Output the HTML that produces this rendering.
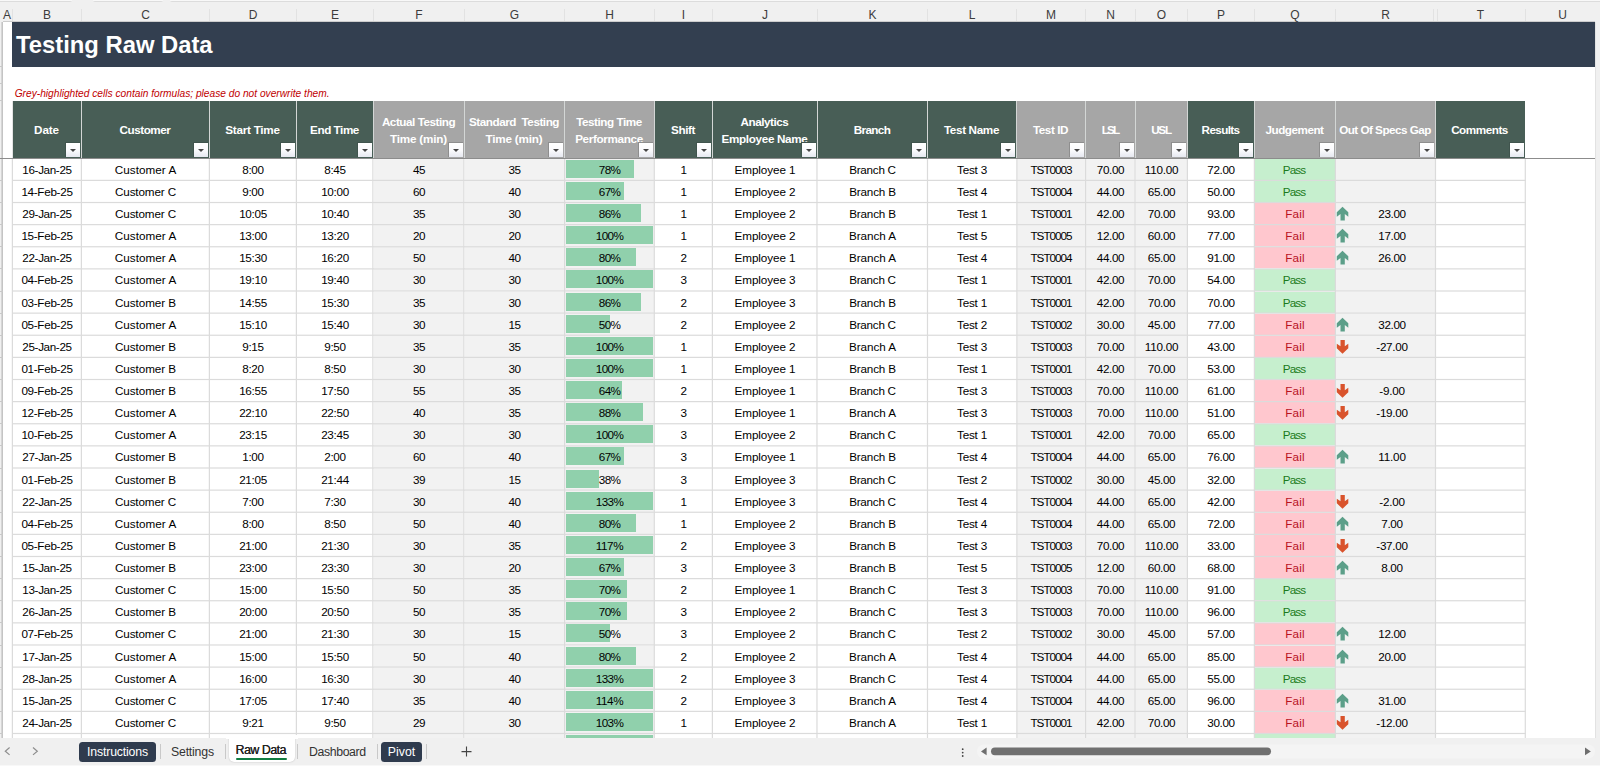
<!DOCTYPE html><html><head><meta charset="utf-8"><title>Testing Raw Data</title><style>
html,body{margin:0;padding:0}
body{width:1600px;height:766px;overflow:hidden;background:#fff;position:relative;font-family:"Liberation Sans",sans-serif;color:#000}
div,span{box-sizing:border-box}
.abs{position:absolute}
#colhdr{left:0;top:0;width:1600px;height:22px;background:#f0f0f0}
#colhdr .top{top:0;height:2px;background:linear-gradient(#f8f8f8 0,#f8f8f8 1px,#dcdcdc 1px,#dcdcdc 2px);border-radius:0 0 3px 3px}
.cl{position:absolute;top:7px;height:16px;line-height:16px;font-size:12px;color:#3c3c3c;text-align:center;width:40px;margin-left:-20px}
.ct{position:absolute;top:9px;width:1px;height:12px;background:#e2e2e2}
#rowhdr{left:0;top:22px;width:3px;height:716px;background:linear-gradient(to right,#f0f0f0 0,#f0f0f0 1px,#d6d6d6 1px,#d6d6d6 2px,#c4c4c4 2px,#c4c4c4 3px)}
#banner{left:12px;top:22px;width:1583px;height:45px;background:#333f50}
#title{left:16px;top:22px;height:45px;line-height:46px;font-size:23.8px;font-weight:bold;color:#fff;white-space:nowrap}
#note{left:14.7px;top:87px;height:14px;line-height:14px;font-size:10.2px;font-style:italic;color:#c00000;white-space:nowrap}
.hc{position:absolute;top:101px;height:57px;color:#fff;font-weight:bold;font-size:11.7px;line-height:17px;padding-right:2px;text-align:center;display:flex;align-items:center;justify-content:center;white-space:nowrap;overflow:hidden}
.hc.g{background:#485e56}
.hc.s{background:#a6a6a6}
.hsep{position:absolute;top:101px;height:57px;width:1.5px;background:#d3d6d5}
.fb{position:absolute;top:142px;width:15px;height:15px;box-sizing:border-box;background:linear-gradient(#ffffff,#fbfbfd 50%,#e6e8f0);border-top:1px solid #40544d;border-left:1px solid #40544d}
.fb.s{border-color:#8e8e8e}
.fb:after{content:"";position:absolute;left:4.1px;top:5.7px;border-left:3.2px solid transparent;border-right:3.2px solid transparent;border-top:3.9px solid #454545}
.c{position:absolute;text-align:center;font-size:11.7px;white-space:nowrap;overflow:hidden;color:#000}
.c.gr{background:#f2f2f2}
.c.pass{background:#c6efce;color:#1b7a1b}
.c.fail{background:#ffc7ce;color:#b8121f}
.bar{position:absolute;background:#90d0ac}
.hl{position:absolute;height:1px;background:#dcdcdc}
.vl{position:absolute;width:1px;background:#dcdcdc}
.vl2{position:absolute;width:1px;background:rgba(120,120,120,.22)}
.hl2{position:absolute;height:1px;background:rgba(120,120,120,.22)}
#frz{left:0;top:158px;width:1595px;height:1px;background:#8c8c8c}
#rightgap{left:1595px;top:22px;width:5px;height:716px;background:#f0f0f0;border-left:1px solid #e2e2e2}
#tabbar{left:0;top:738px;width:1600px;height:28px;background:#f0f0f0}
.tab{position:absolute;font-size:12.3px;height:20px;line-height:20px;white-space:nowrap;color:#333}
.pill{background:#2f3b4e;color:#fff;border-radius:3.5px;text-align:center}
.tsep{position:absolute;top:744px;width:1px;height:15px;background:#c9c9c9}
#active{left:229px;top:738px;width:66px;height:24px;background:#fff;border-radius:0 0 5px 5px;box-shadow:0 0 1.5px rgba(0,0,0,.25)}
#activecover{left:226px;top:735px;width:72px;height:3.5px;background:#fff}
svg{position:absolute;overflow:visible}
</style></head><body>
<div id="colhdr" class="abs"><div class="top abs" style="left:-4px;width:76px"></div><div class="top abs" style="left:92.5px;width:70px"></div><div class="top abs" style="left:170px;width:1434px"></div>
<i class="abs" style="left:3px;top:21px;width:1592px;height:1px;background:#cdcdcd"></i><span class="cl" style="left:7px">A</span>
<span class="cl" style="left:47.0px">B</span>
<span class="cl" style="left:145.5px">C</span>
<span class="cl" style="left:253.0px">D</span>
<span class="cl" style="left:335.0px">E</span>
<span class="cl" style="left:419.0px">F</span>
<span class="cl" style="left:514.5px">G</span>
<span class="cl" style="left:609.5px">H</span>
<span class="cl" style="left:683.5px">I</span>
<span class="cl" style="left:765.0px">J</span>
<span class="cl" style="left:872.5px">K</span>
<span class="cl" style="left:972.0px">L</span>
<span class="cl" style="left:1051.0px">M</span>
<span class="cl" style="left:1110.5px">N</span>
<span class="cl" style="left:1161.5px">O</span>
<span class="cl" style="left:1221.0px">P</span>
<span class="cl" style="left:1295.0px">Q</span>
<span class="cl" style="left:1385.5px">R</span>
<span class="cl" style="left:1480.5px">T</span>
<span class="cl" style="left:1562.5px">U</span>
<i class="ct" style="left:12px"></i>
<i class="ct" style="left:81px"></i>
<i class="ct" style="left:209px"></i>
<i class="ct" style="left:296px"></i>
<i class="ct" style="left:373px"></i>
<i class="ct" style="left:464px"></i>
<i class="ct" style="left:564px"></i>
<i class="ct" style="left:654px"></i>
<i class="ct" style="left:712px"></i>
<i class="ct" style="left:817px"></i>
<i class="ct" style="left:927px"></i>
<i class="ct" style="left:1016px"></i>
<i class="ct" style="left:1085px"></i>
<i class="ct" style="left:1135px"></i>
<i class="ct" style="left:1187px"></i>
<i class="ct" style="left:1254px"></i>
<i class="ct" style="left:1335px"></i>
<i class="ct" style="left:1433px"></i><i class="ct" style="left:1437px"></i>
<i class="ct" style="left:1525px"></i>
</div>
<div id="rowhdr" class="abs"></div>
<i class="hl" style="left:0;top:66px;width:3px;background:#c9c9c9"></i>
<i class="hl" style="left:0;top:83px;width:3px;background:#c9c9c9"></i>
<i class="hl" style="left:0;top:100px;width:3px;background:#c9c9c9"></i>
<i class="hl" style="left:0;top:158px;width:3px;background:#c9c9c9"></i>
<i class="hl" style="left:0;top:180px;width:3px;background:#c9c9c9"></i>
<i class="hl" style="left:0;top:202px;width:3px;background:#c9c9c9"></i>
<i class="hl" style="left:0;top:224px;width:3px;background:#c9c9c9"></i>
<i class="hl" style="left:0;top:246px;width:3px;background:#c9c9c9"></i>
<i class="hl" style="left:0;top:268px;width:3px;background:#c9c9c9"></i>
<i class="hl" style="left:0;top:291px;width:3px;background:#c9c9c9"></i>
<i class="hl" style="left:0;top:313px;width:3px;background:#c9c9c9"></i>
<i class="hl" style="left:0;top:335px;width:3px;background:#c9c9c9"></i>
<i class="hl" style="left:0;top:357px;width:3px;background:#c9c9c9"></i>
<i class="hl" style="left:0;top:379px;width:3px;background:#c9c9c9"></i>
<i class="hl" style="left:0;top:401px;width:3px;background:#c9c9c9"></i>
<i class="hl" style="left:0;top:423px;width:3px;background:#c9c9c9"></i>
<i class="hl" style="left:0;top:445px;width:3px;background:#c9c9c9"></i>
<i class="hl" style="left:0;top:468px;width:3px;background:#c9c9c9"></i>
<i class="hl" style="left:0;top:490px;width:3px;background:#c9c9c9"></i>
<i class="hl" style="left:0;top:512px;width:3px;background:#c9c9c9"></i>
<i class="hl" style="left:0;top:534px;width:3px;background:#c9c9c9"></i>
<i class="hl" style="left:0;top:556px;width:3px;background:#c9c9c9"></i>
<i class="hl" style="left:0;top:578px;width:3px;background:#c9c9c9"></i>
<i class="hl" style="left:0;top:600px;width:3px;background:#c9c9c9"></i>
<i class="hl" style="left:0;top:622px;width:3px;background:#c9c9c9"></i>
<i class="hl" style="left:0;top:645px;width:3px;background:#c9c9c9"></i>
<i class="hl" style="left:0;top:667px;width:3px;background:#c9c9c9"></i>
<i class="hl" style="left:0;top:689px;width:3px;background:#c9c9c9"></i>
<i class="hl" style="left:0;top:711px;width:3px;background:#c9c9c9"></i>
<i class="hl" style="left:0;top:733px;width:3px;background:#c9c9c9"></i>
<div id="banner" class="abs"></div><div id="title" class="abs">Testing Raw Data</div>
<div id="note" class="abs">Grey-highlighted cells contain formulas; please do not overwrite them.</div>
<div class="c" style="left:13px;top:159px;width:68px;height:21px;line-height:21px;letter-spacing:-0.37px">16-Jan-25</div>
<div class="c" style="left:82px;top:159px;width:127px;height:21px;line-height:21px;letter-spacing:0.06px">Customer A</div>
<div class="c" style="left:210px;top:159px;width:86px;height:21px;line-height:21px;letter-spacing:-0.29px">8:00</div>
<div class="c" style="left:297px;top:159px;width:76px;height:21px;line-height:21px;letter-spacing:-0.29px">8:45</div>
<div class="c gr" style="left:374px;top:159px;width:90px;height:21px;line-height:21px;letter-spacing:-0.46px">45</div>
<div class="c gr" style="left:465px;top:159px;width:99px;height:21px;line-height:21px;letter-spacing:-0.46px">35</div>
<div class="c gr" style="left:565px;top:159px;width:89px;height:21px;line-height:21px;letter-spacing:-0.67px"><i class="bar" style="left:1px;top:1px;width:67.9px;height:18px"></i><span style="position:relative">78%</span></div>
<div class="c" style="left:655px;top:159px;width:57px;height:21px;line-height:21px;letter-spacing:-0.47px">1</div>
<div class="c" style="left:713px;top:159px;width:104px;height:21px;line-height:21px;letter-spacing:-0.08px">Employee 1</div>
<div class="c" style="left:818px;top:159px;width:109px;height:21px;line-height:21px;letter-spacing:-0.27px">Branch C</div>
<div class="c" style="left:928px;top:159px;width:88px;height:21px;line-height:21px;letter-spacing:-0.21px">Test 3</div>
<div class="c gr" style="left:1017px;top:159px;width:68px;height:21px;line-height:21px;letter-spacing:-0.99px">TST0003</div>
<div class="c gr" style="left:1086px;top:159px;width:49px;height:21px;line-height:21px;letter-spacing:-0.36px">70.00</div>
<div class="c gr" style="left:1136px;top:159px;width:51px;height:21px;line-height:21px;letter-spacing:-0.23px">110.00</div>
<div class="c" style="left:1188px;top:159px;width:66px;height:21px;line-height:21px;letter-spacing:-0.36px">72.00</div>
<div class="c pass" style="left:1255px;top:159px;width:80px;height:21px;line-height:21px;letter-spacing:-0.84px;padding-right:2px">Pass</div>
<div class="c gr" style="left:1336px;top:159px;width:99px;height:21px;line-height:21px"></div>
<div class="c" style="left:13px;top:181px;width:68px;height:21px;line-height:21px;letter-spacing:-0.30px">14-Feb-25</div>
<div class="c" style="left:82px;top:181px;width:127px;height:21px;line-height:21px;letter-spacing:-0.13px">Customer C</div>
<div class="c" style="left:210px;top:181px;width:86px;height:21px;line-height:21px;letter-spacing:-0.29px">9:00</div>
<div class="c" style="left:297px;top:181px;width:76px;height:21px;line-height:21px;letter-spacing:-0.32px">10:00</div>
<div class="c gr" style="left:374px;top:181px;width:90px;height:21px;line-height:21px;letter-spacing:-0.46px">60</div>
<div class="c gr" style="left:465px;top:181px;width:99px;height:21px;line-height:21px;letter-spacing:-0.46px">40</div>
<div class="c gr" style="left:565px;top:181px;width:89px;height:21px;line-height:21px;letter-spacing:-0.67px"><i class="bar" style="left:1px;top:1px;width:58.3px;height:18px"></i><span style="position:relative">67%</span></div>
<div class="c" style="left:655px;top:181px;width:57px;height:21px;line-height:21px;letter-spacing:-0.47px">1</div>
<div class="c" style="left:713px;top:181px;width:104px;height:21px;line-height:21px;letter-spacing:-0.08px">Employee 2</div>
<div class="c" style="left:818px;top:181px;width:109px;height:21px;line-height:21px;letter-spacing:-0.17px">Branch B</div>
<div class="c" style="left:928px;top:181px;width:88px;height:21px;line-height:21px;letter-spacing:-0.21px">Test 4</div>
<div class="c gr" style="left:1017px;top:181px;width:68px;height:21px;line-height:21px;letter-spacing:-0.99px">TST0004</div>
<div class="c gr" style="left:1086px;top:181px;width:49px;height:21px;line-height:21px;letter-spacing:-0.36px">44.00</div>
<div class="c gr" style="left:1136px;top:181px;width:51px;height:21px;line-height:21px;letter-spacing:-0.36px">65.00</div>
<div class="c" style="left:1188px;top:181px;width:66px;height:21px;line-height:21px;letter-spacing:-0.36px">50.00</div>
<div class="c pass" style="left:1255px;top:181px;width:80px;height:21px;line-height:21px;letter-spacing:-0.84px;padding-right:2px">Pass</div>
<div class="c gr" style="left:1336px;top:181px;width:99px;height:21px;line-height:21px"></div>
<div class="c" style="left:13px;top:203px;width:68px;height:21px;line-height:21px;letter-spacing:-0.37px">29-Jan-25</div>
<div class="c" style="left:82px;top:203px;width:127px;height:21px;line-height:21px;letter-spacing:-0.13px">Customer C</div>
<div class="c" style="left:210px;top:203px;width:86px;height:21px;line-height:21px;letter-spacing:-0.32px">10:05</div>
<div class="c" style="left:297px;top:203px;width:76px;height:21px;line-height:21px;letter-spacing:-0.32px">10:40</div>
<div class="c gr" style="left:374px;top:203px;width:90px;height:21px;line-height:21px;letter-spacing:-0.46px">35</div>
<div class="c gr" style="left:465px;top:203px;width:99px;height:21px;line-height:21px;letter-spacing:-0.46px">30</div>
<div class="c gr" style="left:565px;top:203px;width:89px;height:21px;line-height:21px;letter-spacing:-0.67px"><i class="bar" style="left:1px;top:1px;width:74.8px;height:18px"></i><span style="position:relative">86%</span></div>
<div class="c" style="left:655px;top:203px;width:57px;height:21px;line-height:21px;letter-spacing:-0.47px">1</div>
<div class="c" style="left:713px;top:203px;width:104px;height:21px;line-height:21px;letter-spacing:-0.08px">Employee 2</div>
<div class="c" style="left:818px;top:203px;width:109px;height:21px;line-height:21px;letter-spacing:-0.17px">Branch B</div>
<div class="c" style="left:928px;top:203px;width:88px;height:21px;line-height:21px;letter-spacing:-0.21px">Test 1</div>
<div class="c gr" style="left:1017px;top:203px;width:68px;height:21px;line-height:21px;letter-spacing:-0.99px">TST0001</div>
<div class="c gr" style="left:1086px;top:203px;width:49px;height:21px;line-height:21px;letter-spacing:-0.36px">42.00</div>
<div class="c gr" style="left:1136px;top:203px;width:51px;height:21px;line-height:21px;letter-spacing:-0.36px">70.00</div>
<div class="c" style="left:1188px;top:203px;width:66px;height:21px;line-height:21px;letter-spacing:-0.36px">93.00</div>
<div class="c fail" style="left:1255px;top:203px;width:80px;height:21px;line-height:21px;letter-spacing:0.20px">Fail</div>
<div class="c gr" style="left:1336px;top:203px;width:99px;height:21px;line-height:21px;letter-spacing:-0.36px;padding-left:13px">23.00</div>
<svg style="left:1336px;top:206px" width="13" height="15" viewBox="0 0 13 15"><path d="M6.5 0.7 L12.3 6.3 L12.3 10.8 L8.8 8.1 L8.8 14.5 L4.5 14.5 L4.5 8.1 L0.8 10.8 L0.8 6.3 Z" fill="#5c9f89"/></svg>
<div class="c" style="left:13px;top:225px;width:68px;height:21px;line-height:21px;letter-spacing:-0.30px">15-Feb-25</div>
<div class="c" style="left:82px;top:225px;width:127px;height:21px;line-height:21px;letter-spacing:0.06px">Customer A</div>
<div class="c" style="left:210px;top:225px;width:86px;height:21px;line-height:21px;letter-spacing:-0.32px">13:00</div>
<div class="c" style="left:297px;top:225px;width:76px;height:21px;line-height:21px;letter-spacing:-0.32px">13:20</div>
<div class="c gr" style="left:374px;top:225px;width:90px;height:21px;line-height:21px;letter-spacing:-0.46px">20</div>
<div class="c gr" style="left:465px;top:225px;width:99px;height:21px;line-height:21px;letter-spacing:-0.46px">20</div>
<div class="c gr" style="left:565px;top:225px;width:89px;height:21px;line-height:21px;letter-spacing:-0.62px"><i class="bar" style="left:1px;top:1px;width:87.0px;height:18px"></i><span style="position:relative">100%</span></div>
<div class="c" style="left:655px;top:225px;width:57px;height:21px;line-height:21px;letter-spacing:-0.47px">1</div>
<div class="c" style="left:713px;top:225px;width:104px;height:21px;line-height:21px;letter-spacing:-0.08px">Employee 2</div>
<div class="c" style="left:818px;top:225px;width:109px;height:21px;line-height:21px;letter-spacing:-0.03px">Branch A</div>
<div class="c" style="left:928px;top:225px;width:88px;height:21px;line-height:21px;letter-spacing:-0.21px">Test 5</div>
<div class="c gr" style="left:1017px;top:225px;width:68px;height:21px;line-height:21px;letter-spacing:-0.99px">TST0005</div>
<div class="c gr" style="left:1086px;top:225px;width:49px;height:21px;line-height:21px;letter-spacing:-0.36px">12.00</div>
<div class="c gr" style="left:1136px;top:225px;width:51px;height:21px;line-height:21px;letter-spacing:-0.36px">60.00</div>
<div class="c" style="left:1188px;top:225px;width:66px;height:21px;line-height:21px;letter-spacing:-0.36px">77.00</div>
<div class="c fail" style="left:1255px;top:225px;width:80px;height:21px;line-height:21px;letter-spacing:0.20px">Fail</div>
<div class="c gr" style="left:1336px;top:225px;width:99px;height:21px;line-height:21px;letter-spacing:-0.36px;padding-left:13px">17.00</div>
<svg style="left:1336px;top:228px" width="13" height="15" viewBox="0 0 13 15"><path d="M6.5 0.7 L12.3 6.3 L12.3 10.8 L8.8 8.1 L8.8 14.5 L4.5 14.5 L4.5 8.1 L0.8 10.8 L0.8 6.3 Z" fill="#5c9f89"/></svg>
<div class="c" style="left:13px;top:247px;width:68px;height:21px;line-height:21px;letter-spacing:-0.37px">22-Jan-25</div>
<div class="c" style="left:82px;top:247px;width:127px;height:21px;line-height:21px;letter-spacing:0.06px">Customer A</div>
<div class="c" style="left:210px;top:247px;width:86px;height:21px;line-height:21px;letter-spacing:-0.32px">15:30</div>
<div class="c" style="left:297px;top:247px;width:76px;height:21px;line-height:21px;letter-spacing:-0.32px">16:20</div>
<div class="c gr" style="left:374px;top:247px;width:90px;height:21px;line-height:21px;letter-spacing:-0.46px">50</div>
<div class="c gr" style="left:465px;top:247px;width:99px;height:21px;line-height:21px;letter-spacing:-0.46px">40</div>
<div class="c gr" style="left:565px;top:247px;width:89px;height:21px;line-height:21px;letter-spacing:-0.67px"><i class="bar" style="left:1px;top:1px;width:69.6px;height:18px"></i><span style="position:relative">80%</span></div>
<div class="c" style="left:655px;top:247px;width:57px;height:21px;line-height:21px;letter-spacing:-0.47px">2</div>
<div class="c" style="left:713px;top:247px;width:104px;height:21px;line-height:21px;letter-spacing:-0.08px">Employee 1</div>
<div class="c" style="left:818px;top:247px;width:109px;height:21px;line-height:21px;letter-spacing:-0.03px">Branch A</div>
<div class="c" style="left:928px;top:247px;width:88px;height:21px;line-height:21px;letter-spacing:-0.21px">Test 4</div>
<div class="c gr" style="left:1017px;top:247px;width:68px;height:21px;line-height:21px;letter-spacing:-0.99px">TST0004</div>
<div class="c gr" style="left:1086px;top:247px;width:49px;height:21px;line-height:21px;letter-spacing:-0.36px">44.00</div>
<div class="c gr" style="left:1136px;top:247px;width:51px;height:21px;line-height:21px;letter-spacing:-0.36px">65.00</div>
<div class="c" style="left:1188px;top:247px;width:66px;height:21px;line-height:21px;letter-spacing:-0.36px">91.00</div>
<div class="c fail" style="left:1255px;top:247px;width:80px;height:21px;line-height:21px;letter-spacing:0.20px">Fail</div>
<div class="c gr" style="left:1336px;top:247px;width:99px;height:21px;line-height:21px;letter-spacing:-0.36px;padding-left:13px">26.00</div>
<svg style="left:1336px;top:250px" width="13" height="15" viewBox="0 0 13 15"><path d="M6.5 0.7 L12.3 6.3 L12.3 10.8 L8.8 8.1 L8.8 14.5 L4.5 14.5 L4.5 8.1 L0.8 10.8 L0.8 6.3 Z" fill="#5c9f89"/></svg>
<div class="c" style="left:13px;top:269px;width:68px;height:22px;line-height:21px;letter-spacing:-0.30px">04-Feb-25</div>
<div class="c" style="left:82px;top:269px;width:127px;height:22px;line-height:21px;letter-spacing:0.06px">Customer A</div>
<div class="c" style="left:210px;top:269px;width:86px;height:22px;line-height:21px;letter-spacing:-0.32px">19:10</div>
<div class="c" style="left:297px;top:269px;width:76px;height:22px;line-height:21px;letter-spacing:-0.32px">19:40</div>
<div class="c gr" style="left:374px;top:269px;width:90px;height:22px;line-height:21px;letter-spacing:-0.46px">30</div>
<div class="c gr" style="left:465px;top:269px;width:99px;height:22px;line-height:21px;letter-spacing:-0.46px">30</div>
<div class="c gr" style="left:565px;top:269px;width:89px;height:22px;line-height:21px;letter-spacing:-0.62px"><i class="bar" style="left:1px;top:1px;width:87.0px;height:18px"></i><span style="position:relative">100%</span></div>
<div class="c" style="left:655px;top:269px;width:57px;height:22px;line-height:21px;letter-spacing:-0.47px">3</div>
<div class="c" style="left:713px;top:269px;width:104px;height:22px;line-height:21px;letter-spacing:-0.08px">Employee 3</div>
<div class="c" style="left:818px;top:269px;width:109px;height:22px;line-height:21px;letter-spacing:-0.27px">Branch C</div>
<div class="c" style="left:928px;top:269px;width:88px;height:22px;line-height:21px;letter-spacing:-0.21px">Test 1</div>
<div class="c gr" style="left:1017px;top:269px;width:68px;height:22px;line-height:21px;letter-spacing:-0.99px">TST0001</div>
<div class="c gr" style="left:1086px;top:269px;width:49px;height:22px;line-height:21px;letter-spacing:-0.36px">42.00</div>
<div class="c gr" style="left:1136px;top:269px;width:51px;height:22px;line-height:21px;letter-spacing:-0.36px">70.00</div>
<div class="c" style="left:1188px;top:269px;width:66px;height:22px;line-height:21px;letter-spacing:-0.36px">54.00</div>
<div class="c pass" style="left:1255px;top:269px;width:80px;height:22px;line-height:21px;letter-spacing:-0.84px;padding-right:2px">Pass</div>
<div class="c gr" style="left:1336px;top:269px;width:99px;height:22px;line-height:21px"></div>
<div class="c" style="left:13px;top:292px;width:68px;height:21px;line-height:21px;letter-spacing:-0.30px">03-Feb-25</div>
<div class="c" style="left:82px;top:292px;width:127px;height:21px;line-height:21px;letter-spacing:-0.05px">Customer B</div>
<div class="c" style="left:210px;top:292px;width:86px;height:21px;line-height:21px;letter-spacing:-0.32px">14:55</div>
<div class="c" style="left:297px;top:292px;width:76px;height:21px;line-height:21px;letter-spacing:-0.32px">15:30</div>
<div class="c gr" style="left:374px;top:292px;width:90px;height:21px;line-height:21px;letter-spacing:-0.46px">35</div>
<div class="c gr" style="left:465px;top:292px;width:99px;height:21px;line-height:21px;letter-spacing:-0.46px">30</div>
<div class="c gr" style="left:565px;top:292px;width:89px;height:21px;line-height:21px;letter-spacing:-0.67px"><i class="bar" style="left:1px;top:1px;width:74.8px;height:18px"></i><span style="position:relative">86%</span></div>
<div class="c" style="left:655px;top:292px;width:57px;height:21px;line-height:21px;letter-spacing:-0.47px">2</div>
<div class="c" style="left:713px;top:292px;width:104px;height:21px;line-height:21px;letter-spacing:-0.08px">Employee 3</div>
<div class="c" style="left:818px;top:292px;width:109px;height:21px;line-height:21px;letter-spacing:-0.17px">Branch B</div>
<div class="c" style="left:928px;top:292px;width:88px;height:21px;line-height:21px;letter-spacing:-0.21px">Test 1</div>
<div class="c gr" style="left:1017px;top:292px;width:68px;height:21px;line-height:21px;letter-spacing:-0.99px">TST0001</div>
<div class="c gr" style="left:1086px;top:292px;width:49px;height:21px;line-height:21px;letter-spacing:-0.36px">42.00</div>
<div class="c gr" style="left:1136px;top:292px;width:51px;height:21px;line-height:21px;letter-spacing:-0.36px">70.00</div>
<div class="c" style="left:1188px;top:292px;width:66px;height:21px;line-height:21px;letter-spacing:-0.36px">70.00</div>
<div class="c pass" style="left:1255px;top:292px;width:80px;height:21px;line-height:21px;letter-spacing:-0.84px;padding-right:2px">Pass</div>
<div class="c gr" style="left:1336px;top:292px;width:99px;height:21px;line-height:21px"></div>
<div class="c" style="left:13px;top:314px;width:68px;height:21px;line-height:21px;letter-spacing:-0.30px">05-Feb-25</div>
<div class="c" style="left:82px;top:314px;width:127px;height:21px;line-height:21px;letter-spacing:0.06px">Customer A</div>
<div class="c" style="left:210px;top:314px;width:86px;height:21px;line-height:21px;letter-spacing:-0.32px">15:10</div>
<div class="c" style="left:297px;top:314px;width:76px;height:21px;line-height:21px;letter-spacing:-0.32px">15:40</div>
<div class="c gr" style="left:374px;top:314px;width:90px;height:21px;line-height:21px;letter-spacing:-0.46px">30</div>
<div class="c gr" style="left:465px;top:314px;width:99px;height:21px;line-height:21px;letter-spacing:-0.46px">15</div>
<div class="c gr" style="left:565px;top:314px;width:89px;height:21px;line-height:21px;letter-spacing:-0.67px"><i class="bar" style="left:1px;top:1px;width:43.5px;height:18px"></i><span style="position:relative">50%</span></div>
<div class="c" style="left:655px;top:314px;width:57px;height:21px;line-height:21px;letter-spacing:-0.47px">2</div>
<div class="c" style="left:713px;top:314px;width:104px;height:21px;line-height:21px;letter-spacing:-0.08px">Employee 2</div>
<div class="c" style="left:818px;top:314px;width:109px;height:21px;line-height:21px;letter-spacing:-0.27px">Branch C</div>
<div class="c" style="left:928px;top:314px;width:88px;height:21px;line-height:21px;letter-spacing:-0.21px">Test 2</div>
<div class="c gr" style="left:1017px;top:314px;width:68px;height:21px;line-height:21px;letter-spacing:-0.99px">TST0002</div>
<div class="c gr" style="left:1086px;top:314px;width:49px;height:21px;line-height:21px;letter-spacing:-0.36px">30.00</div>
<div class="c gr" style="left:1136px;top:314px;width:51px;height:21px;line-height:21px;letter-spacing:-0.36px">45.00</div>
<div class="c" style="left:1188px;top:314px;width:66px;height:21px;line-height:21px;letter-spacing:-0.36px">77.00</div>
<div class="c fail" style="left:1255px;top:314px;width:80px;height:21px;line-height:21px;letter-spacing:0.20px">Fail</div>
<div class="c gr" style="left:1336px;top:314px;width:99px;height:21px;line-height:21px;letter-spacing:-0.36px;padding-left:13px">32.00</div>
<svg style="left:1336px;top:317px" width="13" height="15" viewBox="0 0 13 15"><path d="M6.5 0.7 L12.3 6.3 L12.3 10.8 L8.8 8.1 L8.8 14.5 L4.5 14.5 L4.5 8.1 L0.8 10.8 L0.8 6.3 Z" fill="#5c9f89"/></svg>
<div class="c" style="left:13px;top:336px;width:68px;height:21px;line-height:21px;letter-spacing:-0.37px">25-Jan-25</div>
<div class="c" style="left:82px;top:336px;width:127px;height:21px;line-height:21px;letter-spacing:-0.05px">Customer B</div>
<div class="c" style="left:210px;top:336px;width:86px;height:21px;line-height:21px;letter-spacing:-0.29px">9:15</div>
<div class="c" style="left:297px;top:336px;width:76px;height:21px;line-height:21px;letter-spacing:-0.29px">9:50</div>
<div class="c gr" style="left:374px;top:336px;width:90px;height:21px;line-height:21px;letter-spacing:-0.46px">35</div>
<div class="c gr" style="left:465px;top:336px;width:99px;height:21px;line-height:21px;letter-spacing:-0.46px">35</div>
<div class="c gr" style="left:565px;top:336px;width:89px;height:21px;line-height:21px;letter-spacing:-0.62px"><i class="bar" style="left:1px;top:1px;width:87.0px;height:18px"></i><span style="position:relative">100%</span></div>
<div class="c" style="left:655px;top:336px;width:57px;height:21px;line-height:21px;letter-spacing:-0.47px">1</div>
<div class="c" style="left:713px;top:336px;width:104px;height:21px;line-height:21px;letter-spacing:-0.08px">Employee 2</div>
<div class="c" style="left:818px;top:336px;width:109px;height:21px;line-height:21px;letter-spacing:-0.03px">Branch A</div>
<div class="c" style="left:928px;top:336px;width:88px;height:21px;line-height:21px;letter-spacing:-0.21px">Test 3</div>
<div class="c gr" style="left:1017px;top:336px;width:68px;height:21px;line-height:21px;letter-spacing:-0.99px">TST0003</div>
<div class="c gr" style="left:1086px;top:336px;width:49px;height:21px;line-height:21px;letter-spacing:-0.36px">70.00</div>
<div class="c gr" style="left:1136px;top:336px;width:51px;height:21px;line-height:21px;letter-spacing:-0.23px">110.00</div>
<div class="c" style="left:1188px;top:336px;width:66px;height:21px;line-height:21px;letter-spacing:-0.36px">43.00</div>
<div class="c fail" style="left:1255px;top:336px;width:80px;height:21px;line-height:21px;letter-spacing:0.20px">Fail</div>
<div class="c gr" style="left:1336px;top:336px;width:99px;height:21px;line-height:21px;letter-spacing:-0.29px;padding-left:13px">-27.00</div>
<svg style="left:1336px;top:339px" width="13" height="15" viewBox="0 0 13 15"><path d="M6.5 14.7 L12.3 9.2 L12.3 4.7 L8.8 7.3 L8.8 1.1 L4.5 1.1 L4.5 7.3 L0.8 4.7 L0.8 9.2 Z" fill="#d9532c"/></svg>
<div class="c" style="left:13px;top:358px;width:68px;height:21px;line-height:21px;letter-spacing:-0.30px">01-Feb-25</div>
<div class="c" style="left:82px;top:358px;width:127px;height:21px;line-height:21px;letter-spacing:-0.05px">Customer B</div>
<div class="c" style="left:210px;top:358px;width:86px;height:21px;line-height:21px;letter-spacing:-0.29px">8:20</div>
<div class="c" style="left:297px;top:358px;width:76px;height:21px;line-height:21px;letter-spacing:-0.29px">8:50</div>
<div class="c gr" style="left:374px;top:358px;width:90px;height:21px;line-height:21px;letter-spacing:-0.46px">30</div>
<div class="c gr" style="left:465px;top:358px;width:99px;height:21px;line-height:21px;letter-spacing:-0.46px">30</div>
<div class="c gr" style="left:565px;top:358px;width:89px;height:21px;line-height:21px;letter-spacing:-0.62px"><i class="bar" style="left:1px;top:1px;width:87.0px;height:18px"></i><span style="position:relative">100%</span></div>
<div class="c" style="left:655px;top:358px;width:57px;height:21px;line-height:21px;letter-spacing:-0.47px">1</div>
<div class="c" style="left:713px;top:358px;width:104px;height:21px;line-height:21px;letter-spacing:-0.08px">Employee 1</div>
<div class="c" style="left:818px;top:358px;width:109px;height:21px;line-height:21px;letter-spacing:-0.17px">Branch B</div>
<div class="c" style="left:928px;top:358px;width:88px;height:21px;line-height:21px;letter-spacing:-0.21px">Test 1</div>
<div class="c gr" style="left:1017px;top:358px;width:68px;height:21px;line-height:21px;letter-spacing:-0.99px">TST0001</div>
<div class="c gr" style="left:1086px;top:358px;width:49px;height:21px;line-height:21px;letter-spacing:-0.36px">42.00</div>
<div class="c gr" style="left:1136px;top:358px;width:51px;height:21px;line-height:21px;letter-spacing:-0.36px">70.00</div>
<div class="c" style="left:1188px;top:358px;width:66px;height:21px;line-height:21px;letter-spacing:-0.36px">53.00</div>
<div class="c pass" style="left:1255px;top:358px;width:80px;height:21px;line-height:21px;letter-spacing:-0.84px;padding-right:2px">Pass</div>
<div class="c gr" style="left:1336px;top:358px;width:99px;height:21px;line-height:21px"></div>
<div class="c" style="left:13px;top:380px;width:68px;height:21px;line-height:21px;letter-spacing:-0.30px">09-Feb-25</div>
<div class="c" style="left:82px;top:380px;width:127px;height:21px;line-height:21px;letter-spacing:-0.05px">Customer B</div>
<div class="c" style="left:210px;top:380px;width:86px;height:21px;line-height:21px;letter-spacing:-0.32px">16:55</div>
<div class="c" style="left:297px;top:380px;width:76px;height:21px;line-height:21px;letter-spacing:-0.32px">17:50</div>
<div class="c gr" style="left:374px;top:380px;width:90px;height:21px;line-height:21px;letter-spacing:-0.46px">55</div>
<div class="c gr" style="left:465px;top:380px;width:99px;height:21px;line-height:21px;letter-spacing:-0.46px">35</div>
<div class="c gr" style="left:565px;top:380px;width:89px;height:21px;line-height:21px;letter-spacing:-0.67px"><i class="bar" style="left:1px;top:1px;width:55.7px;height:18px"></i><span style="position:relative">64%</span></div>
<div class="c" style="left:655px;top:380px;width:57px;height:21px;line-height:21px;letter-spacing:-0.47px">2</div>
<div class="c" style="left:713px;top:380px;width:104px;height:21px;line-height:21px;letter-spacing:-0.08px">Employee 1</div>
<div class="c" style="left:818px;top:380px;width:109px;height:21px;line-height:21px;letter-spacing:-0.27px">Branch C</div>
<div class="c" style="left:928px;top:380px;width:88px;height:21px;line-height:21px;letter-spacing:-0.21px">Test 3</div>
<div class="c gr" style="left:1017px;top:380px;width:68px;height:21px;line-height:21px;letter-spacing:-0.99px">TST0003</div>
<div class="c gr" style="left:1086px;top:380px;width:49px;height:21px;line-height:21px;letter-spacing:-0.36px">70.00</div>
<div class="c gr" style="left:1136px;top:380px;width:51px;height:21px;line-height:21px;letter-spacing:-0.23px">110.00</div>
<div class="c" style="left:1188px;top:380px;width:66px;height:21px;line-height:21px;letter-spacing:-0.36px">61.00</div>
<div class="c fail" style="left:1255px;top:380px;width:80px;height:21px;line-height:21px;letter-spacing:0.20px">Fail</div>
<div class="c gr" style="left:1336px;top:380px;width:99px;height:21px;line-height:21px;letter-spacing:-0.25px;padding-left:13px">-9.00</div>
<svg style="left:1336px;top:383px" width="13" height="15" viewBox="0 0 13 15"><path d="M6.5 14.7 L12.3 9.2 L12.3 4.7 L8.8 7.3 L8.8 1.1 L4.5 1.1 L4.5 7.3 L0.8 4.7 L0.8 9.2 Z" fill="#d9532c"/></svg>
<div class="c" style="left:13px;top:402px;width:68px;height:21px;line-height:21px;letter-spacing:-0.30px">12-Feb-25</div>
<div class="c" style="left:82px;top:402px;width:127px;height:21px;line-height:21px;letter-spacing:0.06px">Customer A</div>
<div class="c" style="left:210px;top:402px;width:86px;height:21px;line-height:21px;letter-spacing:-0.32px">22:10</div>
<div class="c" style="left:297px;top:402px;width:76px;height:21px;line-height:21px;letter-spacing:-0.32px">22:50</div>
<div class="c gr" style="left:374px;top:402px;width:90px;height:21px;line-height:21px;letter-spacing:-0.46px">40</div>
<div class="c gr" style="left:465px;top:402px;width:99px;height:21px;line-height:21px;letter-spacing:-0.46px">35</div>
<div class="c gr" style="left:565px;top:402px;width:89px;height:21px;line-height:21px;letter-spacing:-0.67px"><i class="bar" style="left:1px;top:1px;width:76.6px;height:18px"></i><span style="position:relative">88%</span></div>
<div class="c" style="left:655px;top:402px;width:57px;height:21px;line-height:21px;letter-spacing:-0.47px">3</div>
<div class="c" style="left:713px;top:402px;width:104px;height:21px;line-height:21px;letter-spacing:-0.08px">Employee 1</div>
<div class="c" style="left:818px;top:402px;width:109px;height:21px;line-height:21px;letter-spacing:-0.03px">Branch A</div>
<div class="c" style="left:928px;top:402px;width:88px;height:21px;line-height:21px;letter-spacing:-0.21px">Test 3</div>
<div class="c gr" style="left:1017px;top:402px;width:68px;height:21px;line-height:21px;letter-spacing:-0.99px">TST0003</div>
<div class="c gr" style="left:1086px;top:402px;width:49px;height:21px;line-height:21px;letter-spacing:-0.36px">70.00</div>
<div class="c gr" style="left:1136px;top:402px;width:51px;height:21px;line-height:21px;letter-spacing:-0.23px">110.00</div>
<div class="c" style="left:1188px;top:402px;width:66px;height:21px;line-height:21px;letter-spacing:-0.36px">51.00</div>
<div class="c fail" style="left:1255px;top:402px;width:80px;height:21px;line-height:21px;letter-spacing:0.20px">Fail</div>
<div class="c gr" style="left:1336px;top:402px;width:99px;height:21px;line-height:21px;letter-spacing:-0.29px;padding-left:13px">-19.00</div>
<svg style="left:1336px;top:405px" width="13" height="15" viewBox="0 0 13 15"><path d="M6.5 14.7 L12.3 9.2 L12.3 4.7 L8.8 7.3 L8.8 1.1 L4.5 1.1 L4.5 7.3 L0.8 4.7 L0.8 9.2 Z" fill="#d9532c"/></svg>
<div class="c" style="left:13px;top:424px;width:68px;height:21px;line-height:21px;letter-spacing:-0.30px">10-Feb-25</div>
<div class="c" style="left:82px;top:424px;width:127px;height:21px;line-height:21px;letter-spacing:0.06px">Customer A</div>
<div class="c" style="left:210px;top:424px;width:86px;height:21px;line-height:21px;letter-spacing:-0.32px">23:15</div>
<div class="c" style="left:297px;top:424px;width:76px;height:21px;line-height:21px;letter-spacing:-0.32px">23:45</div>
<div class="c gr" style="left:374px;top:424px;width:90px;height:21px;line-height:21px;letter-spacing:-0.46px">30</div>
<div class="c gr" style="left:465px;top:424px;width:99px;height:21px;line-height:21px;letter-spacing:-0.46px">30</div>
<div class="c gr" style="left:565px;top:424px;width:89px;height:21px;line-height:21px;letter-spacing:-0.62px"><i class="bar" style="left:1px;top:1px;width:87.0px;height:18px"></i><span style="position:relative">100%</span></div>
<div class="c" style="left:655px;top:424px;width:57px;height:21px;line-height:21px;letter-spacing:-0.47px">3</div>
<div class="c" style="left:713px;top:424px;width:104px;height:21px;line-height:21px;letter-spacing:-0.08px">Employee 2</div>
<div class="c" style="left:818px;top:424px;width:109px;height:21px;line-height:21px;letter-spacing:-0.27px">Branch C</div>
<div class="c" style="left:928px;top:424px;width:88px;height:21px;line-height:21px;letter-spacing:-0.21px">Test 1</div>
<div class="c gr" style="left:1017px;top:424px;width:68px;height:21px;line-height:21px;letter-spacing:-0.99px">TST0001</div>
<div class="c gr" style="left:1086px;top:424px;width:49px;height:21px;line-height:21px;letter-spacing:-0.36px">42.00</div>
<div class="c gr" style="left:1136px;top:424px;width:51px;height:21px;line-height:21px;letter-spacing:-0.36px">70.00</div>
<div class="c" style="left:1188px;top:424px;width:66px;height:21px;line-height:21px;letter-spacing:-0.36px">65.00</div>
<div class="c pass" style="left:1255px;top:424px;width:80px;height:21px;line-height:21px;letter-spacing:-0.84px;padding-right:2px">Pass</div>
<div class="c gr" style="left:1336px;top:424px;width:99px;height:21px;line-height:21px"></div>
<div class="c" style="left:13px;top:446px;width:68px;height:22px;line-height:21px;letter-spacing:-0.37px">27-Jan-25</div>
<div class="c" style="left:82px;top:446px;width:127px;height:22px;line-height:21px;letter-spacing:-0.05px">Customer B</div>
<div class="c" style="left:210px;top:446px;width:86px;height:22px;line-height:21px;letter-spacing:-0.29px">1:00</div>
<div class="c" style="left:297px;top:446px;width:76px;height:22px;line-height:21px;letter-spacing:-0.29px">2:00</div>
<div class="c gr" style="left:374px;top:446px;width:90px;height:22px;line-height:21px;letter-spacing:-0.46px">60</div>
<div class="c gr" style="left:465px;top:446px;width:99px;height:22px;line-height:21px;letter-spacing:-0.46px">40</div>
<div class="c gr" style="left:565px;top:446px;width:89px;height:22px;line-height:21px;letter-spacing:-0.67px"><i class="bar" style="left:1px;top:1px;width:58.3px;height:18px"></i><span style="position:relative">67%</span></div>
<div class="c" style="left:655px;top:446px;width:57px;height:22px;line-height:21px;letter-spacing:-0.47px">3</div>
<div class="c" style="left:713px;top:446px;width:104px;height:22px;line-height:21px;letter-spacing:-0.08px">Employee 1</div>
<div class="c" style="left:818px;top:446px;width:109px;height:22px;line-height:21px;letter-spacing:-0.17px">Branch B</div>
<div class="c" style="left:928px;top:446px;width:88px;height:22px;line-height:21px;letter-spacing:-0.21px">Test 4</div>
<div class="c gr" style="left:1017px;top:446px;width:68px;height:22px;line-height:21px;letter-spacing:-0.99px">TST0004</div>
<div class="c gr" style="left:1086px;top:446px;width:49px;height:22px;line-height:21px;letter-spacing:-0.36px">44.00</div>
<div class="c gr" style="left:1136px;top:446px;width:51px;height:22px;line-height:21px;letter-spacing:-0.36px">65.00</div>
<div class="c" style="left:1188px;top:446px;width:66px;height:22px;line-height:21px;letter-spacing:-0.36px">76.00</div>
<div class="c fail" style="left:1255px;top:446px;width:80px;height:22px;line-height:21px;letter-spacing:0.20px">Fail</div>
<div class="c gr" style="left:1336px;top:446px;width:99px;height:22px;line-height:21px;letter-spacing:-0.19px;padding-left:13px">11.00</div>
<svg style="left:1336px;top:449px" width="13" height="15" viewBox="0 0 13 15"><path d="M6.5 0.7 L12.3 6.3 L12.3 10.8 L8.8 8.1 L8.8 14.5 L4.5 14.5 L4.5 8.1 L0.8 10.8 L0.8 6.3 Z" fill="#5c9f89"/></svg>
<div class="c" style="left:13px;top:469px;width:68px;height:21px;line-height:21px;letter-spacing:-0.30px">01-Feb-25</div>
<div class="c" style="left:82px;top:469px;width:127px;height:21px;line-height:21px;letter-spacing:-0.05px">Customer B</div>
<div class="c" style="left:210px;top:469px;width:86px;height:21px;line-height:21px;letter-spacing:-0.32px">21:05</div>
<div class="c" style="left:297px;top:469px;width:76px;height:21px;line-height:21px;letter-spacing:-0.32px">21:44</div>
<div class="c gr" style="left:374px;top:469px;width:90px;height:21px;line-height:21px;letter-spacing:-0.46px">39</div>
<div class="c gr" style="left:465px;top:469px;width:99px;height:21px;line-height:21px;letter-spacing:-0.46px">15</div>
<div class="c gr" style="left:565px;top:469px;width:89px;height:21px;line-height:21px;letter-spacing:-0.67px"><i class="bar" style="left:1px;top:1px;width:33.1px;height:18px"></i><span style="position:relative">38%</span></div>
<div class="c" style="left:655px;top:469px;width:57px;height:21px;line-height:21px;letter-spacing:-0.47px">3</div>
<div class="c" style="left:713px;top:469px;width:104px;height:21px;line-height:21px;letter-spacing:-0.08px">Employee 3</div>
<div class="c" style="left:818px;top:469px;width:109px;height:21px;line-height:21px;letter-spacing:-0.27px">Branch C</div>
<div class="c" style="left:928px;top:469px;width:88px;height:21px;line-height:21px;letter-spacing:-0.21px">Test 2</div>
<div class="c gr" style="left:1017px;top:469px;width:68px;height:21px;line-height:21px;letter-spacing:-0.99px">TST0002</div>
<div class="c gr" style="left:1086px;top:469px;width:49px;height:21px;line-height:21px;letter-spacing:-0.36px">30.00</div>
<div class="c gr" style="left:1136px;top:469px;width:51px;height:21px;line-height:21px;letter-spacing:-0.36px">45.00</div>
<div class="c" style="left:1188px;top:469px;width:66px;height:21px;line-height:21px;letter-spacing:-0.36px">32.00</div>
<div class="c pass" style="left:1255px;top:469px;width:80px;height:21px;line-height:21px;letter-spacing:-0.84px;padding-right:2px">Pass</div>
<div class="c gr" style="left:1336px;top:469px;width:99px;height:21px;line-height:21px"></div>
<div class="c" style="left:13px;top:491px;width:68px;height:21px;line-height:21px;letter-spacing:-0.37px">22-Jan-25</div>
<div class="c" style="left:82px;top:491px;width:127px;height:21px;line-height:21px;letter-spacing:-0.13px">Customer C</div>
<div class="c" style="left:210px;top:491px;width:86px;height:21px;line-height:21px;letter-spacing:-0.29px">7:00</div>
<div class="c" style="left:297px;top:491px;width:76px;height:21px;line-height:21px;letter-spacing:-0.29px">7:30</div>
<div class="c gr" style="left:374px;top:491px;width:90px;height:21px;line-height:21px;letter-spacing:-0.46px">30</div>
<div class="c gr" style="left:465px;top:491px;width:99px;height:21px;line-height:21px;letter-spacing:-0.46px">40</div>
<div class="c gr" style="left:565px;top:491px;width:89px;height:21px;line-height:21px;letter-spacing:-0.62px"><i class="bar" style="left:1px;top:1px;width:87.0px;height:18px"></i><span style="position:relative">133%</span></div>
<div class="c" style="left:655px;top:491px;width:57px;height:21px;line-height:21px;letter-spacing:-0.47px">1</div>
<div class="c" style="left:713px;top:491px;width:104px;height:21px;line-height:21px;letter-spacing:-0.08px">Employee 3</div>
<div class="c" style="left:818px;top:491px;width:109px;height:21px;line-height:21px;letter-spacing:-0.27px">Branch C</div>
<div class="c" style="left:928px;top:491px;width:88px;height:21px;line-height:21px;letter-spacing:-0.21px">Test 4</div>
<div class="c gr" style="left:1017px;top:491px;width:68px;height:21px;line-height:21px;letter-spacing:-0.99px">TST0004</div>
<div class="c gr" style="left:1086px;top:491px;width:49px;height:21px;line-height:21px;letter-spacing:-0.36px">44.00</div>
<div class="c gr" style="left:1136px;top:491px;width:51px;height:21px;line-height:21px;letter-spacing:-0.36px">65.00</div>
<div class="c" style="left:1188px;top:491px;width:66px;height:21px;line-height:21px;letter-spacing:-0.36px">42.00</div>
<div class="c fail" style="left:1255px;top:491px;width:80px;height:21px;line-height:21px;letter-spacing:0.20px">Fail</div>
<div class="c gr" style="left:1336px;top:491px;width:99px;height:21px;line-height:21px;letter-spacing:-0.25px;padding-left:13px">-2.00</div>
<svg style="left:1336px;top:494px" width="13" height="15" viewBox="0 0 13 15"><path d="M6.5 14.7 L12.3 9.2 L12.3 4.7 L8.8 7.3 L8.8 1.1 L4.5 1.1 L4.5 7.3 L0.8 4.7 L0.8 9.2 Z" fill="#d9532c"/></svg>
<div class="c" style="left:13px;top:513px;width:68px;height:21px;line-height:21px;letter-spacing:-0.30px">04-Feb-25</div>
<div class="c" style="left:82px;top:513px;width:127px;height:21px;line-height:21px;letter-spacing:0.06px">Customer A</div>
<div class="c" style="left:210px;top:513px;width:86px;height:21px;line-height:21px;letter-spacing:-0.29px">8:00</div>
<div class="c" style="left:297px;top:513px;width:76px;height:21px;line-height:21px;letter-spacing:-0.29px">8:50</div>
<div class="c gr" style="left:374px;top:513px;width:90px;height:21px;line-height:21px;letter-spacing:-0.46px">50</div>
<div class="c gr" style="left:465px;top:513px;width:99px;height:21px;line-height:21px;letter-spacing:-0.46px">40</div>
<div class="c gr" style="left:565px;top:513px;width:89px;height:21px;line-height:21px;letter-spacing:-0.67px"><i class="bar" style="left:1px;top:1px;width:69.6px;height:18px"></i><span style="position:relative">80%</span></div>
<div class="c" style="left:655px;top:513px;width:57px;height:21px;line-height:21px;letter-spacing:-0.47px">1</div>
<div class="c" style="left:713px;top:513px;width:104px;height:21px;line-height:21px;letter-spacing:-0.08px">Employee 2</div>
<div class="c" style="left:818px;top:513px;width:109px;height:21px;line-height:21px;letter-spacing:-0.17px">Branch B</div>
<div class="c" style="left:928px;top:513px;width:88px;height:21px;line-height:21px;letter-spacing:-0.21px">Test 4</div>
<div class="c gr" style="left:1017px;top:513px;width:68px;height:21px;line-height:21px;letter-spacing:-0.99px">TST0004</div>
<div class="c gr" style="left:1086px;top:513px;width:49px;height:21px;line-height:21px;letter-spacing:-0.36px">44.00</div>
<div class="c gr" style="left:1136px;top:513px;width:51px;height:21px;line-height:21px;letter-spacing:-0.36px">65.00</div>
<div class="c" style="left:1188px;top:513px;width:66px;height:21px;line-height:21px;letter-spacing:-0.36px">72.00</div>
<div class="c fail" style="left:1255px;top:513px;width:80px;height:21px;line-height:21px;letter-spacing:0.20px">Fail</div>
<div class="c gr" style="left:1336px;top:513px;width:99px;height:21px;line-height:21px;letter-spacing:-0.33px;padding-left:13px">7.00</div>
<svg style="left:1336px;top:516px" width="13" height="15" viewBox="0 0 13 15"><path d="M6.5 0.7 L12.3 6.3 L12.3 10.8 L8.8 8.1 L8.8 14.5 L4.5 14.5 L4.5 8.1 L0.8 10.8 L0.8 6.3 Z" fill="#5c9f89"/></svg>
<div class="c" style="left:13px;top:535px;width:68px;height:21px;line-height:21px;letter-spacing:-0.30px">05-Feb-25</div>
<div class="c" style="left:82px;top:535px;width:127px;height:21px;line-height:21px;letter-spacing:-0.05px">Customer B</div>
<div class="c" style="left:210px;top:535px;width:86px;height:21px;line-height:21px;letter-spacing:-0.32px">21:00</div>
<div class="c" style="left:297px;top:535px;width:76px;height:21px;line-height:21px;letter-spacing:-0.32px">21:30</div>
<div class="c gr" style="left:374px;top:535px;width:90px;height:21px;line-height:21px;letter-spacing:-0.46px">30</div>
<div class="c gr" style="left:465px;top:535px;width:99px;height:21px;line-height:21px;letter-spacing:-0.46px">35</div>
<div class="c gr" style="left:565px;top:535px;width:89px;height:21px;line-height:21px;letter-spacing:-0.40px"><i class="bar" style="left:1px;top:1px;width:87.0px;height:18px"></i><span style="position:relative">117%</span></div>
<div class="c" style="left:655px;top:535px;width:57px;height:21px;line-height:21px;letter-spacing:-0.47px">2</div>
<div class="c" style="left:713px;top:535px;width:104px;height:21px;line-height:21px;letter-spacing:-0.08px">Employee 3</div>
<div class="c" style="left:818px;top:535px;width:109px;height:21px;line-height:21px;letter-spacing:-0.17px">Branch B</div>
<div class="c" style="left:928px;top:535px;width:88px;height:21px;line-height:21px;letter-spacing:-0.21px">Test 3</div>
<div class="c gr" style="left:1017px;top:535px;width:68px;height:21px;line-height:21px;letter-spacing:-0.99px">TST0003</div>
<div class="c gr" style="left:1086px;top:535px;width:49px;height:21px;line-height:21px;letter-spacing:-0.36px">70.00</div>
<div class="c gr" style="left:1136px;top:535px;width:51px;height:21px;line-height:21px;letter-spacing:-0.23px">110.00</div>
<div class="c" style="left:1188px;top:535px;width:66px;height:21px;line-height:21px;letter-spacing:-0.36px">33.00</div>
<div class="c fail" style="left:1255px;top:535px;width:80px;height:21px;line-height:21px;letter-spacing:0.20px">Fail</div>
<div class="c gr" style="left:1336px;top:535px;width:99px;height:21px;line-height:21px;letter-spacing:-0.29px;padding-left:13px">-37.00</div>
<svg style="left:1336px;top:538px" width="13" height="15" viewBox="0 0 13 15"><path d="M6.5 14.7 L12.3 9.2 L12.3 4.7 L8.8 7.3 L8.8 1.1 L4.5 1.1 L4.5 7.3 L0.8 4.7 L0.8 9.2 Z" fill="#d9532c"/></svg>
<div class="c" style="left:13px;top:557px;width:68px;height:21px;line-height:21px;letter-spacing:-0.37px">15-Jan-25</div>
<div class="c" style="left:82px;top:557px;width:127px;height:21px;line-height:21px;letter-spacing:-0.05px">Customer B</div>
<div class="c" style="left:210px;top:557px;width:86px;height:21px;line-height:21px;letter-spacing:-0.32px">23:00</div>
<div class="c" style="left:297px;top:557px;width:76px;height:21px;line-height:21px;letter-spacing:-0.32px">23:30</div>
<div class="c gr" style="left:374px;top:557px;width:90px;height:21px;line-height:21px;letter-spacing:-0.46px">30</div>
<div class="c gr" style="left:465px;top:557px;width:99px;height:21px;line-height:21px;letter-spacing:-0.46px">20</div>
<div class="c gr" style="left:565px;top:557px;width:89px;height:21px;line-height:21px;letter-spacing:-0.67px"><i class="bar" style="left:1px;top:1px;width:58.3px;height:18px"></i><span style="position:relative">67%</span></div>
<div class="c" style="left:655px;top:557px;width:57px;height:21px;line-height:21px;letter-spacing:-0.47px">3</div>
<div class="c" style="left:713px;top:557px;width:104px;height:21px;line-height:21px;letter-spacing:-0.08px">Employee 3</div>
<div class="c" style="left:818px;top:557px;width:109px;height:21px;line-height:21px;letter-spacing:-0.17px">Branch B</div>
<div class="c" style="left:928px;top:557px;width:88px;height:21px;line-height:21px;letter-spacing:-0.21px">Test 5</div>
<div class="c gr" style="left:1017px;top:557px;width:68px;height:21px;line-height:21px;letter-spacing:-0.99px">TST0005</div>
<div class="c gr" style="left:1086px;top:557px;width:49px;height:21px;line-height:21px;letter-spacing:-0.36px">12.00</div>
<div class="c gr" style="left:1136px;top:557px;width:51px;height:21px;line-height:21px;letter-spacing:-0.36px">60.00</div>
<div class="c" style="left:1188px;top:557px;width:66px;height:21px;line-height:21px;letter-spacing:-0.36px">68.00</div>
<div class="c fail" style="left:1255px;top:557px;width:80px;height:21px;line-height:21px;letter-spacing:0.20px">Fail</div>
<div class="c gr" style="left:1336px;top:557px;width:99px;height:21px;line-height:21px;letter-spacing:-0.33px;padding-left:13px">8.00</div>
<svg style="left:1336px;top:560px" width="13" height="15" viewBox="0 0 13 15"><path d="M6.5 0.7 L12.3 6.3 L12.3 10.8 L8.8 8.1 L8.8 14.5 L4.5 14.5 L4.5 8.1 L0.8 10.8 L0.8 6.3 Z" fill="#5c9f89"/></svg>
<div class="c" style="left:13px;top:579px;width:68px;height:21px;line-height:21px;letter-spacing:-0.37px">13-Jan-25</div>
<div class="c" style="left:82px;top:579px;width:127px;height:21px;line-height:21px;letter-spacing:-0.13px">Customer C</div>
<div class="c" style="left:210px;top:579px;width:86px;height:21px;line-height:21px;letter-spacing:-0.32px">15:00</div>
<div class="c" style="left:297px;top:579px;width:76px;height:21px;line-height:21px;letter-spacing:-0.32px">15:50</div>
<div class="c gr" style="left:374px;top:579px;width:90px;height:21px;line-height:21px;letter-spacing:-0.46px">50</div>
<div class="c gr" style="left:465px;top:579px;width:99px;height:21px;line-height:21px;letter-spacing:-0.46px">35</div>
<div class="c gr" style="left:565px;top:579px;width:89px;height:21px;line-height:21px;letter-spacing:-0.67px"><i class="bar" style="left:1px;top:1px;width:60.9px;height:18px"></i><span style="position:relative">70%</span></div>
<div class="c" style="left:655px;top:579px;width:57px;height:21px;line-height:21px;letter-spacing:-0.47px">2</div>
<div class="c" style="left:713px;top:579px;width:104px;height:21px;line-height:21px;letter-spacing:-0.08px">Employee 1</div>
<div class="c" style="left:818px;top:579px;width:109px;height:21px;line-height:21px;letter-spacing:-0.27px">Branch C</div>
<div class="c" style="left:928px;top:579px;width:88px;height:21px;line-height:21px;letter-spacing:-0.21px">Test 3</div>
<div class="c gr" style="left:1017px;top:579px;width:68px;height:21px;line-height:21px;letter-spacing:-0.99px">TST0003</div>
<div class="c gr" style="left:1086px;top:579px;width:49px;height:21px;line-height:21px;letter-spacing:-0.36px">70.00</div>
<div class="c gr" style="left:1136px;top:579px;width:51px;height:21px;line-height:21px;letter-spacing:-0.23px">110.00</div>
<div class="c" style="left:1188px;top:579px;width:66px;height:21px;line-height:21px;letter-spacing:-0.36px">91.00</div>
<div class="c pass" style="left:1255px;top:579px;width:80px;height:21px;line-height:21px;letter-spacing:-0.84px;padding-right:2px">Pass</div>
<div class="c gr" style="left:1336px;top:579px;width:99px;height:21px;line-height:21px"></div>
<div class="c" style="left:13px;top:601px;width:68px;height:21px;line-height:21px;letter-spacing:-0.37px">26-Jan-25</div>
<div class="c" style="left:82px;top:601px;width:127px;height:21px;line-height:21px;letter-spacing:-0.05px">Customer B</div>
<div class="c" style="left:210px;top:601px;width:86px;height:21px;line-height:21px;letter-spacing:-0.32px">20:00</div>
<div class="c" style="left:297px;top:601px;width:76px;height:21px;line-height:21px;letter-spacing:-0.32px">20:50</div>
<div class="c gr" style="left:374px;top:601px;width:90px;height:21px;line-height:21px;letter-spacing:-0.46px">50</div>
<div class="c gr" style="left:465px;top:601px;width:99px;height:21px;line-height:21px;letter-spacing:-0.46px">35</div>
<div class="c gr" style="left:565px;top:601px;width:89px;height:21px;line-height:21px;letter-spacing:-0.67px"><i class="bar" style="left:1px;top:1px;width:60.9px;height:18px"></i><span style="position:relative">70%</span></div>
<div class="c" style="left:655px;top:601px;width:57px;height:21px;line-height:21px;letter-spacing:-0.47px">3</div>
<div class="c" style="left:713px;top:601px;width:104px;height:21px;line-height:21px;letter-spacing:-0.08px">Employee 2</div>
<div class="c" style="left:818px;top:601px;width:109px;height:21px;line-height:21px;letter-spacing:-0.27px">Branch C</div>
<div class="c" style="left:928px;top:601px;width:88px;height:21px;line-height:21px;letter-spacing:-0.21px">Test 3</div>
<div class="c gr" style="left:1017px;top:601px;width:68px;height:21px;line-height:21px;letter-spacing:-0.99px">TST0003</div>
<div class="c gr" style="left:1086px;top:601px;width:49px;height:21px;line-height:21px;letter-spacing:-0.36px">70.00</div>
<div class="c gr" style="left:1136px;top:601px;width:51px;height:21px;line-height:21px;letter-spacing:-0.23px">110.00</div>
<div class="c" style="left:1188px;top:601px;width:66px;height:21px;line-height:21px;letter-spacing:-0.36px">96.00</div>
<div class="c pass" style="left:1255px;top:601px;width:80px;height:21px;line-height:21px;letter-spacing:-0.84px;padding-right:2px">Pass</div>
<div class="c gr" style="left:1336px;top:601px;width:99px;height:21px;line-height:21px"></div>
<div class="c" style="left:13px;top:623px;width:68px;height:22px;line-height:21px;letter-spacing:-0.30px">07-Feb-25</div>
<div class="c" style="left:82px;top:623px;width:127px;height:22px;line-height:21px;letter-spacing:-0.13px">Customer C</div>
<div class="c" style="left:210px;top:623px;width:86px;height:22px;line-height:21px;letter-spacing:-0.32px">21:00</div>
<div class="c" style="left:297px;top:623px;width:76px;height:22px;line-height:21px;letter-spacing:-0.32px">21:30</div>
<div class="c gr" style="left:374px;top:623px;width:90px;height:22px;line-height:21px;letter-spacing:-0.46px">30</div>
<div class="c gr" style="left:465px;top:623px;width:99px;height:22px;line-height:21px;letter-spacing:-0.46px">15</div>
<div class="c gr" style="left:565px;top:623px;width:89px;height:22px;line-height:21px;letter-spacing:-0.67px"><i class="bar" style="left:1px;top:1px;width:43.5px;height:18px"></i><span style="position:relative">50%</span></div>
<div class="c" style="left:655px;top:623px;width:57px;height:22px;line-height:21px;letter-spacing:-0.47px">3</div>
<div class="c" style="left:713px;top:623px;width:104px;height:22px;line-height:21px;letter-spacing:-0.08px">Employee 2</div>
<div class="c" style="left:818px;top:623px;width:109px;height:22px;line-height:21px;letter-spacing:-0.27px">Branch C</div>
<div class="c" style="left:928px;top:623px;width:88px;height:22px;line-height:21px;letter-spacing:-0.21px">Test 2</div>
<div class="c gr" style="left:1017px;top:623px;width:68px;height:22px;line-height:21px;letter-spacing:-0.99px">TST0002</div>
<div class="c gr" style="left:1086px;top:623px;width:49px;height:22px;line-height:21px;letter-spacing:-0.36px">30.00</div>
<div class="c gr" style="left:1136px;top:623px;width:51px;height:22px;line-height:21px;letter-spacing:-0.36px">45.00</div>
<div class="c" style="left:1188px;top:623px;width:66px;height:22px;line-height:21px;letter-spacing:-0.36px">57.00</div>
<div class="c fail" style="left:1255px;top:623px;width:80px;height:22px;line-height:21px;letter-spacing:0.20px">Fail</div>
<div class="c gr" style="left:1336px;top:623px;width:99px;height:22px;line-height:21px;letter-spacing:-0.36px;padding-left:13px">12.00</div>
<svg style="left:1336px;top:626px" width="13" height="15" viewBox="0 0 13 15"><path d="M6.5 0.7 L12.3 6.3 L12.3 10.8 L8.8 8.1 L8.8 14.5 L4.5 14.5 L4.5 8.1 L0.8 10.8 L0.8 6.3 Z" fill="#5c9f89"/></svg>
<div class="c" style="left:13px;top:646px;width:68px;height:21px;line-height:21px;letter-spacing:-0.37px">17-Jan-25</div>
<div class="c" style="left:82px;top:646px;width:127px;height:21px;line-height:21px;letter-spacing:0.06px">Customer A</div>
<div class="c" style="left:210px;top:646px;width:86px;height:21px;line-height:21px;letter-spacing:-0.32px">15:00</div>
<div class="c" style="left:297px;top:646px;width:76px;height:21px;line-height:21px;letter-spacing:-0.32px">15:50</div>
<div class="c gr" style="left:374px;top:646px;width:90px;height:21px;line-height:21px;letter-spacing:-0.46px">50</div>
<div class="c gr" style="left:465px;top:646px;width:99px;height:21px;line-height:21px;letter-spacing:-0.46px">40</div>
<div class="c gr" style="left:565px;top:646px;width:89px;height:21px;line-height:21px;letter-spacing:-0.67px"><i class="bar" style="left:1px;top:1px;width:69.6px;height:18px"></i><span style="position:relative">80%</span></div>
<div class="c" style="left:655px;top:646px;width:57px;height:21px;line-height:21px;letter-spacing:-0.47px">2</div>
<div class="c" style="left:713px;top:646px;width:104px;height:21px;line-height:21px;letter-spacing:-0.08px">Employee 2</div>
<div class="c" style="left:818px;top:646px;width:109px;height:21px;line-height:21px;letter-spacing:-0.03px">Branch A</div>
<div class="c" style="left:928px;top:646px;width:88px;height:21px;line-height:21px;letter-spacing:-0.21px">Test 4</div>
<div class="c gr" style="left:1017px;top:646px;width:68px;height:21px;line-height:21px;letter-spacing:-0.99px">TST0004</div>
<div class="c gr" style="left:1086px;top:646px;width:49px;height:21px;line-height:21px;letter-spacing:-0.36px">44.00</div>
<div class="c gr" style="left:1136px;top:646px;width:51px;height:21px;line-height:21px;letter-spacing:-0.36px">65.00</div>
<div class="c" style="left:1188px;top:646px;width:66px;height:21px;line-height:21px;letter-spacing:-0.36px">85.00</div>
<div class="c fail" style="left:1255px;top:646px;width:80px;height:21px;line-height:21px;letter-spacing:0.20px">Fail</div>
<div class="c gr" style="left:1336px;top:646px;width:99px;height:21px;line-height:21px;letter-spacing:-0.36px;padding-left:13px">20.00</div>
<svg style="left:1336px;top:649px" width="13" height="15" viewBox="0 0 13 15"><path d="M6.5 0.7 L12.3 6.3 L12.3 10.8 L8.8 8.1 L8.8 14.5 L4.5 14.5 L4.5 8.1 L0.8 10.8 L0.8 6.3 Z" fill="#5c9f89"/></svg>
<div class="c" style="left:13px;top:668px;width:68px;height:21px;line-height:21px;letter-spacing:-0.37px">28-Jan-25</div>
<div class="c" style="left:82px;top:668px;width:127px;height:21px;line-height:21px;letter-spacing:0.06px">Customer A</div>
<div class="c" style="left:210px;top:668px;width:86px;height:21px;line-height:21px;letter-spacing:-0.32px">16:00</div>
<div class="c" style="left:297px;top:668px;width:76px;height:21px;line-height:21px;letter-spacing:-0.32px">16:30</div>
<div class="c gr" style="left:374px;top:668px;width:90px;height:21px;line-height:21px;letter-spacing:-0.46px">30</div>
<div class="c gr" style="left:465px;top:668px;width:99px;height:21px;line-height:21px;letter-spacing:-0.46px">40</div>
<div class="c gr" style="left:565px;top:668px;width:89px;height:21px;line-height:21px;letter-spacing:-0.62px"><i class="bar" style="left:1px;top:1px;width:87.0px;height:18px"></i><span style="position:relative">133%</span></div>
<div class="c" style="left:655px;top:668px;width:57px;height:21px;line-height:21px;letter-spacing:-0.47px">2</div>
<div class="c" style="left:713px;top:668px;width:104px;height:21px;line-height:21px;letter-spacing:-0.08px">Employee 3</div>
<div class="c" style="left:818px;top:668px;width:109px;height:21px;line-height:21px;letter-spacing:-0.27px">Branch C</div>
<div class="c" style="left:928px;top:668px;width:88px;height:21px;line-height:21px;letter-spacing:-0.21px">Test 4</div>
<div class="c gr" style="left:1017px;top:668px;width:68px;height:21px;line-height:21px;letter-spacing:-0.99px">TST0004</div>
<div class="c gr" style="left:1086px;top:668px;width:49px;height:21px;line-height:21px;letter-spacing:-0.36px">44.00</div>
<div class="c gr" style="left:1136px;top:668px;width:51px;height:21px;line-height:21px;letter-spacing:-0.36px">65.00</div>
<div class="c" style="left:1188px;top:668px;width:66px;height:21px;line-height:21px;letter-spacing:-0.36px">55.00</div>
<div class="c pass" style="left:1255px;top:668px;width:80px;height:21px;line-height:21px;letter-spacing:-0.84px;padding-right:2px">Pass</div>
<div class="c gr" style="left:1336px;top:668px;width:99px;height:21px;line-height:21px"></div>
<div class="c" style="left:13px;top:690px;width:68px;height:21px;line-height:21px;letter-spacing:-0.37px">15-Jan-25</div>
<div class="c" style="left:82px;top:690px;width:127px;height:21px;line-height:21px;letter-spacing:-0.13px">Customer C</div>
<div class="c" style="left:210px;top:690px;width:86px;height:21px;line-height:21px;letter-spacing:-0.32px">17:05</div>
<div class="c" style="left:297px;top:690px;width:76px;height:21px;line-height:21px;letter-spacing:-0.32px">17:40</div>
<div class="c gr" style="left:374px;top:690px;width:90px;height:21px;line-height:21px;letter-spacing:-0.46px">35</div>
<div class="c gr" style="left:465px;top:690px;width:99px;height:21px;line-height:21px;letter-spacing:-0.46px">40</div>
<div class="c gr" style="left:565px;top:690px;width:89px;height:21px;line-height:21px;letter-spacing:-0.40px"><i class="bar" style="left:1px;top:1px;width:87.0px;height:18px"></i><span style="position:relative">114%</span></div>
<div class="c" style="left:655px;top:690px;width:57px;height:21px;line-height:21px;letter-spacing:-0.47px">2</div>
<div class="c" style="left:713px;top:690px;width:104px;height:21px;line-height:21px;letter-spacing:-0.08px">Employee 3</div>
<div class="c" style="left:818px;top:690px;width:109px;height:21px;line-height:21px;letter-spacing:-0.03px">Branch A</div>
<div class="c" style="left:928px;top:690px;width:88px;height:21px;line-height:21px;letter-spacing:-0.21px">Test 4</div>
<div class="c gr" style="left:1017px;top:690px;width:68px;height:21px;line-height:21px;letter-spacing:-0.99px">TST0004</div>
<div class="c gr" style="left:1086px;top:690px;width:49px;height:21px;line-height:21px;letter-spacing:-0.36px">44.00</div>
<div class="c gr" style="left:1136px;top:690px;width:51px;height:21px;line-height:21px;letter-spacing:-0.36px">65.00</div>
<div class="c" style="left:1188px;top:690px;width:66px;height:21px;line-height:21px;letter-spacing:-0.36px">96.00</div>
<div class="c fail" style="left:1255px;top:690px;width:80px;height:21px;line-height:21px;letter-spacing:0.20px">Fail</div>
<div class="c gr" style="left:1336px;top:690px;width:99px;height:21px;line-height:21px;letter-spacing:-0.36px;padding-left:13px">31.00</div>
<svg style="left:1336px;top:693px" width="13" height="15" viewBox="0 0 13 15"><path d="M6.5 0.7 L12.3 6.3 L12.3 10.8 L8.8 8.1 L8.8 14.5 L4.5 14.5 L4.5 8.1 L0.8 10.8 L0.8 6.3 Z" fill="#5c9f89"/></svg>
<div class="c" style="left:13px;top:712px;width:68px;height:21px;line-height:21px;letter-spacing:-0.37px">24-Jan-25</div>
<div class="c" style="left:82px;top:712px;width:127px;height:21px;line-height:21px;letter-spacing:-0.13px">Customer C</div>
<div class="c" style="left:210px;top:712px;width:86px;height:21px;line-height:21px;letter-spacing:-0.29px">9:21</div>
<div class="c" style="left:297px;top:712px;width:76px;height:21px;line-height:21px;letter-spacing:-0.29px">9:50</div>
<div class="c gr" style="left:374px;top:712px;width:90px;height:21px;line-height:21px;letter-spacing:-0.46px">29</div>
<div class="c gr" style="left:465px;top:712px;width:99px;height:21px;line-height:21px;letter-spacing:-0.46px">30</div>
<div class="c gr" style="left:565px;top:712px;width:89px;height:21px;line-height:21px;letter-spacing:-0.62px"><i class="bar" style="left:1px;top:1px;width:87.0px;height:18px"></i><span style="position:relative">103%</span></div>
<div class="c" style="left:655px;top:712px;width:57px;height:21px;line-height:21px;letter-spacing:-0.47px">1</div>
<div class="c" style="left:713px;top:712px;width:104px;height:21px;line-height:21px;letter-spacing:-0.08px">Employee 2</div>
<div class="c" style="left:818px;top:712px;width:109px;height:21px;line-height:21px;letter-spacing:-0.03px">Branch A</div>
<div class="c" style="left:928px;top:712px;width:88px;height:21px;line-height:21px;letter-spacing:-0.21px">Test 1</div>
<div class="c gr" style="left:1017px;top:712px;width:68px;height:21px;line-height:21px;letter-spacing:-0.99px">TST0001</div>
<div class="c gr" style="left:1086px;top:712px;width:49px;height:21px;line-height:21px;letter-spacing:-0.36px">42.00</div>
<div class="c gr" style="left:1136px;top:712px;width:51px;height:21px;line-height:21px;letter-spacing:-0.36px">70.00</div>
<div class="c" style="left:1188px;top:712px;width:66px;height:21px;line-height:21px;letter-spacing:-0.36px">30.00</div>
<div class="c fail" style="left:1255px;top:712px;width:80px;height:21px;line-height:21px;letter-spacing:0.20px">Fail</div>
<div class="c gr" style="left:1336px;top:712px;width:99px;height:21px;line-height:21px;letter-spacing:-0.29px;padding-left:13px">-12.00</div>
<svg style="left:1336px;top:715px" width="13" height="15" viewBox="0 0 13 15"><path d="M6.5 14.7 L12.3 9.2 L12.3 4.7 L8.8 7.3 L8.8 1.1 L4.5 1.1 L4.5 7.3 L0.8 4.7 L0.8 9.2 Z" fill="#d9532c"/></svg>
<div class="c gr" style="left:374px;top:734px;width:90px;height:4px;line-height:21px"></div>
<div class="c gr" style="left:465px;top:734px;width:99px;height:4px;line-height:21px"></div>
<div class="c gr" style="left:565px;top:734px;width:89px;height:4px;line-height:21px"><i class="bar" style="left:1px;top:1px;width:87.0px;height:3px"></i><span style="position:relative"></span></div>
<div class="c gr" style="left:1017px;top:734px;width:68px;height:4px;line-height:21px"></div>
<div class="c gr" style="left:1086px;top:734px;width:49px;height:4px;line-height:21px"></div>
<div class="c gr" style="left:1136px;top:734px;width:51px;height:4px;line-height:21px"></div>
<div class="c pass" style="left:1255px;top:734px;width:80px;height:4px;line-height:21px;padding-right:2px">Pass</div>
<div class="c gr" style="left:1336px;top:734px;width:99px;height:4px;line-height:21px"></div>
<svg style="left:0;top:0" width="1600" height="738" viewBox="0 0 1600 738"><g fill="#dbdbdb"><rect x="12" y="179.78" width="1513.8" height="1.2"/><rect x="12" y="201.91" width="1513.8" height="1.2"/><rect x="12" y="224.03" width="1513.8" height="1.2"/><rect x="12" y="246.16" width="1513.8" height="1.2"/><rect x="12" y="268.28" width="1513.8" height="1.2"/><rect x="12" y="290.40" width="1513.8" height="1.2"/><rect x="12" y="312.53" width="1513.8" height="1.2"/><rect x="12" y="334.65" width="1513.8" height="1.2"/><rect x="12" y="356.78" width="1513.8" height="1.2"/><rect x="12" y="378.90" width="1513.8" height="1.2"/><rect x="12" y="401.02" width="1513.8" height="1.2"/><rect x="12" y="423.15" width="1513.8" height="1.2"/><rect x="12" y="445.27" width="1513.8" height="1.2"/><rect x="12" y="467.40" width="1513.8" height="1.2"/><rect x="12" y="489.52" width="1513.8" height="1.2"/><rect x="12" y="511.64" width="1513.8" height="1.2"/><rect x="12" y="533.77" width="1513.8" height="1.2"/><rect x="12" y="555.89" width="1513.8" height="1.2"/><rect x="12" y="578.02" width="1513.8" height="1.2"/><rect x="12" y="600.14" width="1513.8" height="1.2"/><rect x="12" y="622.26" width="1513.8" height="1.2"/><rect x="12" y="644.39" width="1513.8" height="1.2"/><rect x="12" y="666.51" width="1513.8" height="1.2"/><rect x="12" y="688.64" width="1513.8" height="1.2"/><rect x="12" y="710.76" width="1513.8" height="1.2"/><rect x="12" y="732.88" width="1513.8" height="1.2"/><rect x="11.78" y="159" width="1.2" height="579"/><rect x="80.78" y="159" width="1.2" height="579"/><rect x="208.78" y="159" width="1.2" height="579"/><rect x="295.78" y="159" width="1.2" height="579"/><rect x="372.28" y="159" width="1.2" height="579"/><rect x="463.28" y="159" width="1.2" height="579"/><rect x="563.98" y="159" width="1.2" height="579"/><rect x="653.68" y="159" width="1.2" height="579"/><rect x="711.78" y="159" width="1.2" height="579"/><rect x="816.38" y="159" width="1.2" height="579"/><rect x="926.88" y="159" width="1.2" height="579"/><rect x="1016.28" y="159" width="1.2" height="579"/><rect x="1084.98" y="159" width="1.2" height="579"/><rect x="1134.48" y="159" width="1.2" height="579"/><rect x="1186.78" y="159" width="1.2" height="579"/><rect x="1253.78" y="159" width="1.2" height="579"/><rect x="1334.78" y="159" width="1.2" height="579"/><rect x="1434.88" y="159" width="1.2" height="579"/><rect x="1524.68" y="159" width="1.2" height="579"/></g></svg>
<i class="vl" style="left:12px;top:101px;height:58px;background:#e4e4e4"></i>
<div class="hc g" style="left:13px;width:69px"><span><span style="letter-spacing:-0.14px">Date</span></span></div>
<div class="hc g" style="left:82px;width:128px"><span><span style="letter-spacing:-0.47px">Customer</span></span></div>
<div class="hc g" style="left:210px;width:87px"><span><span style="letter-spacing:-0.25px">Start Time</span></span></div>
<div class="hc g" style="left:297px;width:77px"><span><span style="letter-spacing:-0.45px">End Time</span></span></div>
<div class="hc s" style="left:374px;width:91px"><span><span style="letter-spacing:-0.46px">Actual Testing</span><br><span style="letter-spacing:-0.18px">Time (min)</span></span></div>
<div class="hc s" style="left:465px;width:100px"><span><span style="letter-spacing:-0.46px">Standard&nbsp; Testing</span><br><span style="letter-spacing:-0.18px">Time (min)</span></span></div>
<div class="hc s" style="left:565px;width:90px"><span><span style="letter-spacing:-0.44px">Testing Time</span><br><span style="letter-spacing:-0.34px">Performance</span></span></div>
<div class="hc g" style="left:655px;width:58px"><span><span style="letter-spacing:-0.39px">Shift</span></span></div>
<div class="hc g" style="left:713px;width:105px"><span><span style="letter-spacing:-0.47px">Analytics</span><br><span style="letter-spacing:-0.33px">Employee Name</span></span></div>
<div class="hc g" style="left:818px;width:110px"><span><span style="letter-spacing:-0.62px">Branch</span></span></div>
<div class="hc g" style="left:928px;width:89px"><span><span style="letter-spacing:-0.35px">Test Name</span></span></div>
<div class="hc s" style="left:1017px;width:69px"><span><span style="letter-spacing:-0.42px">Test ID</span></span></div>
<div class="hc s" style="left:1086px;width:50px"><span><span style="letter-spacing:-1.78px">LSL</span></span></div>
<div class="hc s" style="left:1136px;width:52px"><span><span style="letter-spacing:-1.24px">USL</span></span></div>
<div class="hc g" style="left:1188px;width:67px"><span><span style="letter-spacing:-0.63px">Results</span></span></div>
<div class="hc s" style="left:1255px;width:81px"><span><span style="letter-spacing:-0.49px">Judgement</span></span></div>
<div class="hc s" style="left:1336px;width:100px"><span><span style="letter-spacing:-0.52px">Out Of Specs Gap</span></span></div>
<div class="hc g" style="left:1436px;width:89px"><span><span style="letter-spacing:-0.46px">Comments</span></span></div>
<i class="hsep" style="left:80.9px"></i>
<i class="hsep" style="left:208.9px"></i>
<i class="hsep" style="left:295.9px"></i>
<i class="hsep" style="left:372.9px"></i>
<i class="hsep" style="left:463.9px"></i>
<i class="hsep" style="left:563.9px"></i>
<i class="hsep" style="left:653.9px"></i>
<i class="hsep" style="left:711.9px"></i>
<i class="hsep" style="left:816.9px"></i>
<i class="hsep" style="left:926.9px"></i>
<i class="hsep" style="left:1015.9px"></i>
<i class="hsep" style="left:1084.9px"></i>
<i class="hsep" style="left:1134.9px"></i>
<i class="hsep" style="left:1186.9px"></i>
<i class="hsep" style="left:1253.9px"></i>
<i class="hsep" style="left:1334.9px"></i>
<i class="hsep" style="left:1434.9px"></i>
<i class="fb g" style="left:65.4px"></i>
<i class="fb g" style="left:193.4px"></i>
<i class="fb g" style="left:280.4px"></i>
<i class="fb g" style="left:357.4px"></i>
<i class="fb s" style="left:448.4px"></i>
<i class="fb s" style="left:548.4px"></i>
<i class="fb s" style="left:638.4px"></i>
<i class="fb g" style="left:696.4px"></i>
<i class="fb g" style="left:801.4px"></i>
<i class="fb g" style="left:911.4px"></i>
<i class="fb g" style="left:1000.4px"></i>
<i class="fb s" style="left:1069.4px"></i>
<i class="fb s" style="left:1119.4px"></i>
<i class="fb s" style="left:1171.4px"></i>
<i class="fb g" style="left:1238.4px"></i>
<i class="fb s" style="left:1319.4px"></i>
<i class="fb s" style="left:1419.4px"></i>
<i class="fb g" style="left:1509.4px"></i>
<div id="frz" class="abs"></div>
<div id="rightgap" class="abs"></div>
<div id="tabbar" class="abs"></div><i class="abs" style="left:0;top:765px;width:1600px;height:1px;background:#f8f8f8"></i>
<div id="active" class="abs"></div><div id="activecover" class="abs"></div>
<svg style="left:0;top:738px" width="1600" height="28" viewBox="0 0 1600 28"><path d="M9.6 9.5 L5.3 13.2 L9.6 16.9" fill="none" stroke="#8e8e8e" stroke-width="1.2"/><path d="M33 9.5 L37.3 13.2 L33 16.9" fill="none" stroke="#8e8e8e" stroke-width="1.2"/><path d="M461.5 13.6 H471.5 M466.5 8.6 V18.6" fill="none" stroke="#444" stroke-width="1.1"/><circle cx="962.7" cy="11.2" r="0.9" fill="#444"/><circle cx="962.7" cy="14.6" r="0.9" fill="#444"/><circle cx="962.7" cy="18" r="0.9" fill="#444"/><rect x="977" y="6.5" width="618" height="14" rx="7" fill="#f4f4f4"/><path d="M986.6 9.6 L986.6 17.2 L981 13.4 Z" fill="#6e6e6e"/><path d="M1585 9.6 L1585 17.2 L1590.8 13.4 Z" fill="#6e6e6e"/><rect x="991" y="9.4" width="280" height="7.8" rx="3.9" fill="#707070"/></svg>
<div class="tab pill" style="left:79px;top:742px;width:77px;letter-spacing:-0.17px">Instructions</div>
<div class="tab" style="left:171px;top:742px;letter-spacing:-0.2px">Settings</div>
<div class="tab" style="left:235.5px;top:739.5px;color:#222;text-shadow:0.3px 0 0 #222;letter-spacing:-0.45px">Raw Data</div>
<i class="abs" style="left:235.5px;top:757.5px;width:51.5px;height:2px;background:#117d42;border-radius:1px"></i>
<div class="tab" style="left:309px;top:742px;letter-spacing:-0.38px">Dashboard</div>
<div class="tab pill" style="left:381px;top:742px;width:41px">Pivot</div>
<i class="tsep" style="left:160px"></i>
<i class="tsep" style="left:225px"></i>
<i class="tsep" style="left:297px"></i>
<i class="tsep" style="left:377px"></i>
<i class="tsep" style="left:426px"></i>
</body></html>
